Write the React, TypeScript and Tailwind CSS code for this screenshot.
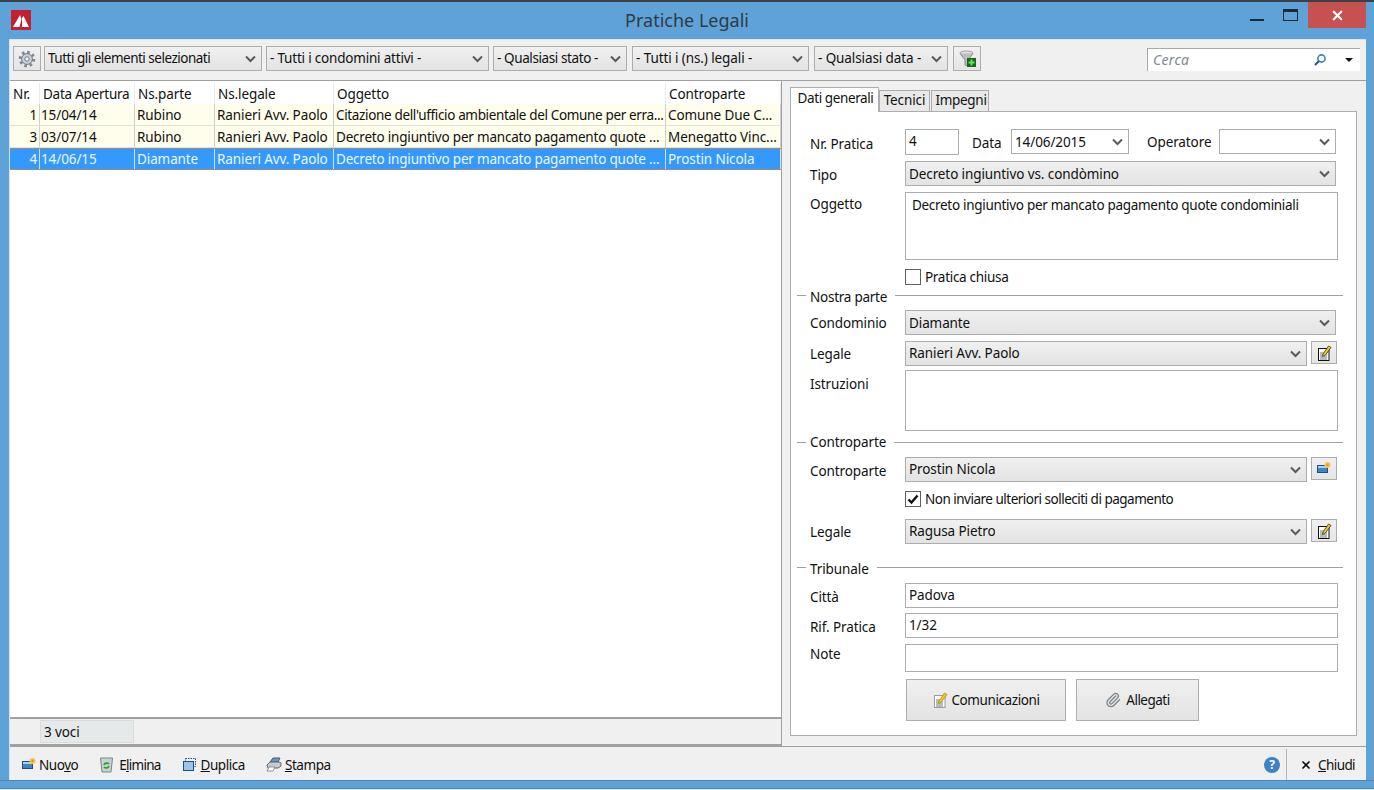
import { ReactNode } from "react"
import { Paperclip, X } from "lucide-react"

const cols = ["w-[30px]", "w-[95px]", "w-[80px]", "w-[119px]", "w-[332px]", "flex-1"]
const headers = ["Nr.", "Data Apertura", "Ns.parte", "Ns.legale", "Oggetto", "Controparte"]
const rows = [
    ["1", "15/04/14", "Rubino", "Ranieri Avv. Paolo", "Citazione dell'ufficio ambientale del Comune per erra...", "Comune Due C..."],
    ["3", "03/07/14", "Rubino", "Ranieri Avv. Paolo", "Decreto ingiuntivo per mancato pagamento quote ...", "Menegatto Vinc..."],
    ["4", "14/06/15", "Diamante", "Ranieri Avv. Paolo", "Decreto ingiuntivo per mancato pagamento quote ...", "Prostin Nicola"],
]
const filters = [
    ["ml-[1px] w-[218px] tracking-[-0.5px]", "Tutti gli elementi selezionati"],
    ["ml-[1px] w-[223px] tracking-[-0.2px]", "- Tutti i condomini attivi -"],
    ["ml-[1px] w-[134px] tracking-[-0.4px]", "- Qualsiasi stato -"],
    ["ml-[2px] w-[177px]", "- Tutti i (ns.) legali -"],
    ["ml-[2px] w-[134px]", "- Qualsiasi data -"],
]

function Chevron() {
    return (
        <svg width="11" height="8" viewBox="0 0 11 8" className="shrink-0">
            <path d="M1 1.5 L5.5 6 L10 1.5" fill="none" stroke="#5a5a5a" strokeWidth="2" />
        </svg>
    )
}

function Combo({ text, className = "", textClass = "", white = false }: { text?: string; className?: string; textClass?: string; white?: boolean }) {
    return (
        <div className={`flex items-center justify-between border border-[#adadad] pl-[3px] pr-[5px] ${white ? "bg-white" : "bg-gradient-to-b from-[#f0f0f0] to-[#e3e3e3]"} ${className}`}>
            <span className={`truncate ${textClass}`}>{text}</span>
            <Chevron />
        </div>
    )
}

function NoteIcon({ light = false }: { light?: boolean }) {
    return (
        <svg width="16" height="16" viewBox="0 0 16 16">
            <rect x="2.5" y="3.5" width="10.5" height="12" fill="#fff" stroke={light ? "#9a9a9a" : "#111"} />
            <path d="M4 8h4M4 10h7M4 12h7M4 14h7" stroke="#777" />
            <path d="M7 9 L12.5 1 L15 2.5 L9 10.5 L6.5 11.5Z" fill="#f5c518" stroke={light ? "#a8861a" : "#222"} strokeWidth="0.7" />
        </svg>
    )
}

function NewIcon() {
    return (
        <svg width="14" height="13" viewBox="0 0 14 13">
            <rect x="0.5" y="3.5" width="10" height="7" fill="#3f86c6" stroke="#1d4f86" />
            <rect x="1" y="4" width="9" height="2" fill="#a9d1f0" />
            <circle cx="10.5" cy="3" r="3" fill="#f7c64a" />
            <circle cx="10.5" cy="3" r="1.2" fill="#f08a3c" />
        </svg>
    )
}

function SmallButton({ children }: { children: ReactNode }) {
    return (
        <div className="ml-[4px] flex h-[23px] w-[26px] items-center justify-center border border-[#adadad] bg-gradient-to-b from-[#f0f0f0] to-[#e5e5e5]">
            {children}
        </div>
    )
}

function FieldRow({ label, children, className = "", labelClass = "" }: { label: string; children: ReactNode; className?: string; labelClass?: string }) {
    return (
        <div className={`flex ${className}`}>
            <div className={`w-[95px] shrink-0 ${labelClass}`}>{label}</div>
            {children}
        </div>
    )
}

function Section({ label, className = "", labelClass = "" }: { label: string; className?: string; labelClass?: string }) {
    return (
        <div className={`flex h-[18px] items-center gap-[4px] ${className}`}>
            <div className="ml-[-13px] h-px w-[9px] bg-[#a0a0a0]" />
            <span className={labelClass}>{label}</span>
            <div className="ml-[4px] mr-[-5px] h-px flex-1 bg-[#a0a0a0]" />
        </div>
    )
}

function Check({ on }: { on?: boolean }) {
    return (
        <div className="flex h-[16px] w-[16px] items-center justify-center border border-[#5f5f5f] bg-white">
            {on && (
                <svg width="12" height="11" viewBox="0 0 12 11">
                    <path d="M1.5 5.5 L4.5 8.5 L10.5 1.5" fill="none" stroke="#111" strokeWidth="2.4" />
                </svg>
            )}
        </div>
    )
}

function ToolAction({ icon, children, className = "" }: { icon: ReactNode; children: ReactNode; className?: string }) {
    return (
        <div className={`flex items-center ${className}`}>
            {icon}
            <span>{children}</span>
        </div>
    )
}

export default function App() {
    return (
        <div className="flex h-[790px] w-[1374px] flex-col overflow-hidden bg-[#5fa2d8] text-[13.5px] leading-[18px] tracking-[-0.1px] text-[#111] font-['Noto_Sans',sans-serif]">
            <div className="h-[2px] shrink-0 bg-[#3c4148]" />

            {/* barra titolo */}
            <div className="flex h-[37px] shrink-0 items-start pl-[11px] pr-[8px] pt-[8px]">
                <svg width="20" height="20" viewBox="0 0 20 20">
                    <rect width="20" height="20" fill="#c4202e" />
                    <path d="M2 17 L9 5 L10.5 9 L8.5 17Z M11 17 L11 8 L12.5 6 L18 17Z" fill="#fff" />
                </svg>
                <div className="mt-[-2px] flex-1 pl-[93px] text-center text-[18px] leading-[24px] tracking-normal text-[#2f3a44]">Pratiche Legali</div>
                <div className="flex h-[26px] items-start">
                    <div className="mr-[19px] mt-[9px] h-[2px] w-[14px] bg-[#1f2933]" />
                    <div className="mr-[10px] mt-[-1px] h-[12px] w-[15px] border border-[#1f2933] border-t-[3px]" />
                    <div className="mt-[-8px] flex h-[26px] w-[58px] items-center justify-center bg-[#c75050]">
                        <X size={15} color="#fff" strokeWidth={3.5} />
                    </div>
                </div>
            </div>

            {/* finestra */}
            <div className="ml-[9px] mr-[8px] flex h-[741px] shrink-0 flex-col border-l border-t border-[#d9e3ec] bg-[#f0f0f0]">
                <div className="flex h-[41px] shrink-0 items-start border-b border-[#a0a0a0] pl-[3px] pt-[6px]">
                    <div className="mr-[2px] flex h-[25px] w-[28px] items-center justify-center border border-[#adadad] bg-gradient-to-b from-[#f0f0f0] to-[#e5e5e5]">
                        <svg width="18" height="18" viewBox="0 0 18 18">
                            <circle cx="9" cy="9" r="6.8" fill="none" stroke="#7d8993" strokeWidth="3" strokeDasharray="2.6 2.74" />
                            <circle cx="9" cy="9" r="5.4" fill="#c9d0d5" stroke="#6f7a83" />
                            <circle cx="9" cy="9" r="2.2" fill="#f4f6f7" stroke="#6f7a83" />
                        </svg>
                    </div>
                    {filters.map(([c, text], i) => (
                        <Combo key={i} text={text} textClass="pb-[2px]" className={`mr-[3px] h-[25px] ${c}`} />
                    ))}
                    <div className="ml-[2px] flex h-[25px] w-[28px] items-center justify-center border border-[#adadad] bg-gradient-to-b from-[#f0f0f0] to-[#e5e5e5]">
                        <svg width="17" height="18" viewBox="0 0 17 18">
                            <ellipse cx="7.5" cy="3" rx="6.5" ry="2" fill="#dfe2e4" stroke="#9a9fa3" />
                            <path d="M1 3.5 L6 10 V15 L9 16 V10 L14 3.5" fill="#b9bdc0" stroke="#8a8f93" />
                            <rect x="8" y="8" width="9" height="9" fill="#14691c" />
                            <path d="M12.5 9.5 V15.5 M9.5 12.5 H15.5" stroke="#6fdc55" strokeWidth="2" />
                        </svg>
                    </div>
                    <div className="ml-auto mr-[6px] mt-[2px] flex h-[23px] w-[213px] items-center border-l border-t border-[#a8a8a8] bg-white pl-[5px] pr-[7px]">
                        <span className="flex-1 text-[14px] italic tracking-[0.3px] text-[#808890]">Cerca</span>
                        <svg width="14" height="14" viewBox="0 0 14 14" className="mr-[18px]">
                            <circle cx="8.5" cy="5.5" r="3.6" fill="none" stroke="#3f7fc4" strokeWidth="1.6" />
                            <path d="M6 8 L2 12" stroke="#1f4f96" strokeWidth="2" />
                        </svg>
                        <svg width="8" height="4" viewBox="0 0 8 4">
                            <path d="M0 0 H8 L4 4Z" fill="#111" />
                        </svg>
                    </div>
                </div>

                <div className="flex min-h-0 flex-1">
                    {/* elenco */}
                    <div className="flex w-[772px] shrink-0 flex-col border-r border-[#a0a0a0]">
                        <div className="flex-1 bg-white">
                            <div className="flex h-[23px] pt-[2px]">
                                {headers.map((h, i) => (
                                    <div key={h} className={`${cols[i]} flex items-center whitespace-nowrap border-r border-[#e6ebf5] pl-[3px] ${i === 1 ? "tracking-[-0.25px]" : ""}`}>{h}</div>
                                ))}
                            </div>
                            {rows.map((r, ri) => {
                                const selected = ri === 2
                                return (
                                    <div key={r[0]} className={`flex h-[22px] ${selected ? "border-y border-dotted border-[#ff7f00] bg-[#3399ff] text-[#f0f6ff]" : "border-b border-[#e2e2d8] bg-[#fffdeb]"}`}>
                                        {r.map((c, i) => (
                                            <div key={i} className={`${cols[i]} flex items-center overflow-hidden whitespace-nowrap border-r ${selected ? "border-[#cfe4fb]" : "border-[#d0d0d0]"} ${i === 0 ? "justify-end pr-[2px]" : i === 1 ? "pl-[1px]" : "pl-[2px]"} ${i === 4 ? (ri === 0 ? "tracking-[-0.35px]" : "tracking-[-0.2px]") : ""}`}>{c}</div>
                                        ))}
                                    </div>
                                )
                            })}
                        </div>
                        <div className="h-[29px] shrink-0 border-y-2 border-y-[#a0a0a0] pl-[30px] pt-[1px]">
                            <div className="h-[23px] w-[94px] border border-[#dcdcdc] bg-[#e6e9ea] pl-[3px] leading-[23px]">3 voci</div>
                        </div>
                    </div>

                    {/* dettaglio */}
                    <div className="flex-1 pl-[8px] pr-[9px] pt-[7px]">
                        <div className="flex h-[24px] items-end">
                            <div className="relative z-10 h-[25px] w-[89px] border-x border-t border-[#adadad] bg-white pl-[2px] pt-[1px] text-center whitespace-nowrap tracking-[-0.4px]">Dati generali</div>
                            <div className="h-[22px] w-[51px] border border-[#adadad] bg-[#e9e9e9] text-center">Tecnici</div>
                            <div className="ml-px h-[22px] w-[58px] border border-[#adadad] bg-[#e9e9e9] pl-[2px] text-center tracking-[-0.3px]">Impegni</div>
                        </div>
                        <div className="mt-[-1px] h-[625px] w-[567px] border border-[#adadad] bg-white pl-[19px] pr-[18px] pt-[17px]">
                            <FieldRow label="Nr. Pratica" className="h-[26px]" labelClass="pt-[6px]">
                                <div className="h-[26px] w-[54px] border border-[#adadad] pl-[3px] pt-[2px]">4</div>
                                <div className="w-[52px] pl-[13px] pt-[5px]">Data</div>
                                <Combo text="14/06/2015" white className="h-[25px] w-[118px]" />
                                <div className="w-[90px] pl-[18px] pt-[4px]">Operatore</div>
                                <Combo white className="h-[25px] w-[117px]" />
                            </FieldRow>
                            <FieldRow label="Tipo" className="mt-[6px] h-[25px]" labelClass="pt-[5px]">
                                <Combo text="Decreto ingiuntivo vs. condòmino" className="w-[431px]" />
                            </FieldRow>
                            <FieldRow label="Oggetto" className="mt-[6px] h-[68px]" labelClass="pt-[3px]">
                                <div className="w-[433px] border border-[#adadad] px-[6px] py-[3px] tracking-[-0.3px]">Decreto ingiuntivo per mancato pagamento quote condominiali</div>
                            </FieldRow>
                            <div className="ml-[95px] mt-[8px] flex h-[17px] items-center gap-[4px]">
                                <Check />
                                <span className="tracking-[-0.3px]">Pratica chiusa</span>
                            </div>
                            <Section label="Nostra parte" className="mt-[1px]" labelClass="pt-[3px] tracking-[-0.25px]" />
                            <FieldRow label="Condominio" className="mt-[6px] h-[25px]" labelClass="pt-[4px]">
                                <Combo text="Diamante" className="w-[431px]" />
                            </FieldRow>
                            <FieldRow label="Legale" className="mt-[6px] h-[25px]" labelClass="pt-[4px]">
                                <Combo text="Ranieri Avv. Paolo" textClass="pb-[2px]" className="w-[402px]" />
                                <SmallButton><NoteIcon /></SmallButton>
                            </FieldRow>
                            <FieldRow label="Istruzioni" className="mt-[4px] h-[61px]" labelClass="pt-[5px]">
                                <div className="w-[433px] border border-[#adadad]" />
                            </FieldRow>
                            <Section label="Controparte" className="mt-[2px]" />
                            <FieldRow label="Controparte" className="mt-[6px] h-[25px]" labelClass="pt-[5px]">
                                <Combo text="Prostin Nicola" textClass="pb-[2px]" className="w-[402px]" />
                                <SmallButton><NewIcon /></SmallButton>
                            </FieldRow>
                            <div className="ml-[95px] mt-[8px] flex h-[18px] items-center gap-[4px]">
                                <Check on />
                                <span className="tracking-[-0.5px]">Non inviare ulteriori solleciti di pagamento</span>
                            </div>
                            <FieldRow label="Legale" className="mt-[11px] h-[25px]" labelClass="pt-[4px]">
                                <Combo text="Ragusa Pietro" textClass="pb-[2px]" className="w-[402px]" />
                                <SmallButton><NoteIcon /></SmallButton>
                            </FieldRow>
                            <Section label="Tribunale" className="mt-[14px]" labelClass="pt-[3px]" />
                            <FieldRow label="Città" className="mt-[7px] h-[25px]" labelClass="pt-[5px]">
                                <div className="w-[433px] border border-[#adadad] pl-[3px] pt-[2px]">Padova</div>
                            </FieldRow>
                            <FieldRow label="Rif. Pratica" className="mt-[5px] h-[25px]" labelClass="pt-[5px]">
                                <div className="w-[433px] border border-[#adadad] pl-[3px] pt-[2px]">1/32</div>
                            </FieldRow>
                            <FieldRow label="Note" className="mt-[6px] h-[28px]" labelClass="pt-[1px]">
                                <div className="w-[433px] border border-[#adadad]" />
                            </FieldRow>
                            <div className="ml-[96px] mt-[7px] flex gap-[10px]">
                                <div className="flex h-[42px] w-[160px] items-center justify-center gap-[3px] border border-[#adadad] bg-gradient-to-b from-[#f0f0f0] to-[#e3e3e3]">
                                    <NoteIcon light />
                                    <span className="tracking-[-0.4px]">Comunicazioni</span>
                                </div>
                                <div className="flex h-[42px] w-[123px] items-center justify-center gap-[5px] border border-[#adadad] bg-gradient-to-b from-[#f0f0f0] to-[#e3e3e3]">
                                    <Paperclip size={16} color="#7c858c" />
                                    <span className="tracking-[-0.5px]">Allegati</span>
                                </div>
                            </div>
                        </div>
                    </div>
                </div>

                {/* barra inferiore */}
                <div className="flex h-[34px] shrink-0 items-center border-t border-[#a0a0a0] pl-[12px] pr-[10px] pt-[2px]">
                    <ToolAction className="gap-[3px] tracking-[-0.45px]" icon={<NewIcon />}>Nuo<u>v</u>o</ToolAction>
                    <ToolAction className="ml-[21px] gap-[5px] tracking-[-0.75px]" icon={
                        <svg width="15" height="17" viewBox="0 0 15 17">
                            <path d="M1.5 2 H13.5 L12 16 H3Z" fill="#c8d2d2" stroke="#7b8686" />
                            <path d="M5 9 A3 3 0 0 1 10 8 M10 10 A3 3 0 0 1 5 11" fill="none" stroke="#2f9e32" strokeWidth="1.8" />
                        </svg>
                    }>E<u>l</u>imina</ToolAction>
                    <ToolAction className="ml-[22px] gap-[5px] tracking-[-0.45px]" icon={
                        <svg width="13" height="13" viewBox="0 0 13 13">
                            <rect x="2.5" y="0.5" width="10" height="8" fill="none" stroke="#1d4f86" strokeDasharray="1.5 1" />
                            <rect x="0.5" y="3.5" width="10" height="9" fill="#9cc6e8" stroke="#1d4f86" />
                        </svg>
                    }><u>D</u>uplica</ToolAction>
                    <ToolAction className="ml-[21px] gap-[3px] tracking-[-0.45px]" icon={
                        <svg width="16" height="15" viewBox="0 0 16 15">
                            <path d="M4 5 L7 1 H14 L12 5Z" fill="#5d9bd3" stroke="#4a5c6c" />
                            <path d="M1 8 L4 5 H13 L15 6 V9 L12 11 H2Z" fill="#c6ccd0" stroke="#5c666e" />
                            <path d="M1 14 L3 10 H9 L7 14Z" fill="#fff" stroke="#8a9298" />
                        </svg>
                    }><u>S</u>tampa</ToolAction>
                    <div className="ml-auto flex h-[32px] items-center">
                        <div className="flex h-[16px] w-[16px] items-center justify-center rounded-full bg-[#3b82c8] text-[12px] font-bold text-white">?</div>
                        <div className="mx-[6px] h-[31px] w-px bg-[#b5b5b5]" />
                        <X size={12} color="#111" strokeWidth={3.5} className="ml-[7px] mr-[6px]" />
                        <span className="mr-[1px] tracking-[-0.6px]"><u>C</u>hiudi</span>
                    </div>
                </div>
            </div>
            <div className="h-[9px] shrink-0 border-y border-y-[#4a86b8]" />
            <div className="h-px shrink-0 bg-[#dfe6ec]" />
        </div>
    )
}
